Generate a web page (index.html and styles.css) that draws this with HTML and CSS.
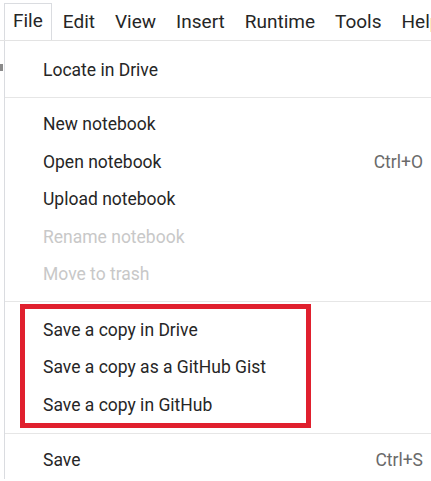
FILE: index.html
```html
<!DOCTYPE html>
<html>
<head>
<meta charset="utf-8">
<link rel="stylesheet" href="styles.css">
</head>
<body>
<div class="page">
  <div class="menubar">
    <div class="tab tab-open">File</div>
    <div class="tab">Edit</div>
    <div class="tab">View</div>
    <div class="tab">Insert</div>
    <div class="tab">Runtime</div>
    <div class="tab">Tools</div>
    <div class="tab">Help</div>
  </div>
  <div class="body">
    <div class="gutter"><span class="mark"></span></div>
    <div class="menu">
      <div class="item">Locate in Drive</div>
      <div class="sep"></div>
      <div class="item">New notebook</div>
      <div class="item"><span>Open notebook</span><span class="key">Ctrl+O</span></div>
      <div class="item">Upload notebook</div>
      <div class="item disabled">Rename notebook</div>
      <div class="item disabled">Move to trash</div>
      <div class="sep"></div>
      <div class="group">
        <div class="item">Save a copy in Drive</div>
        <div class="item">Save a copy as a GitHub Gist</div>
        <div class="item">Save a copy in GitHub</div>
      </div>
      <div class="sep"></div>
      <div class="item"><span>Save</span><span class="key">Ctrl+S</span></div>
    </div>
  </div>
</div>
</body>
</html>
```
FILE: styles.css
```css
html, body {
  margin: 0;
  padding: 0;
  background: #ffffff;
}
body {
  font-family: Roboto, "Noto Sans", Arial, sans-serif;
  color: #262626;
  overflow: hidden;
  width: 431px;
  height: 481px;
}
.page {
  display: flex;
  flex-direction: column;
}
.menubar {
  display: flex;
  align-items: flex-end;
  height: 41px;
  box-sizing: border-box;
  padding-left: 4px;
  border-bottom: 1px solid #e3e3e3;
  white-space: nowrap;
  overflow: hidden;
}
.tab {
  font-size: 19px;
  height: 37px;
  line-height: 34px;
  padding: 0 8.5px 0 8px;
  border: 1px solid transparent;
  border-bottom: none;
  box-sizing: border-box;
  margin-bottom: -1px;
  flex: none;
}
.tab + .tab {
  padding: 0 8.5px 0 9.5px;
}
.tab-open {
  border-color: #dadce0;
  background: #fff;
  height: 38px;
}
.body {
  display: flex;
}
.gutter {
  width: 4px;
  flex: none;
}
.mark {
  display: block;
  width: 3px;
  height: 7px;
  margin-top: 23px;
  background: #8a8a8a;
}
.menu {
  flex: 1;
  border-left: 1px solid #dadce0;
  padding-top: 10px;
  font-size: 17.5px;
}
.item {
  height: 37.5px;
  display: flex;
  align-items: center;
  justify-content: space-between;
  padding: 0 8px 0 38px;
}
.item.disabled {
  color: #c8c8c8;
}
.key {
  color: #6a6a6a;
}
.sep {
  height: 1px;
  background: #e6e6e6;
  margin: 8px 0;
}
.group {
  position: relative;
  padding: 1px 0;
}
.group::after {
  content: "";
  position: absolute;
  left: 15px;
  top: -6px;
  width: 291px;
  height: 124px;
  box-sizing: border-box;
  border: 5px solid #e0202e;
}
```
